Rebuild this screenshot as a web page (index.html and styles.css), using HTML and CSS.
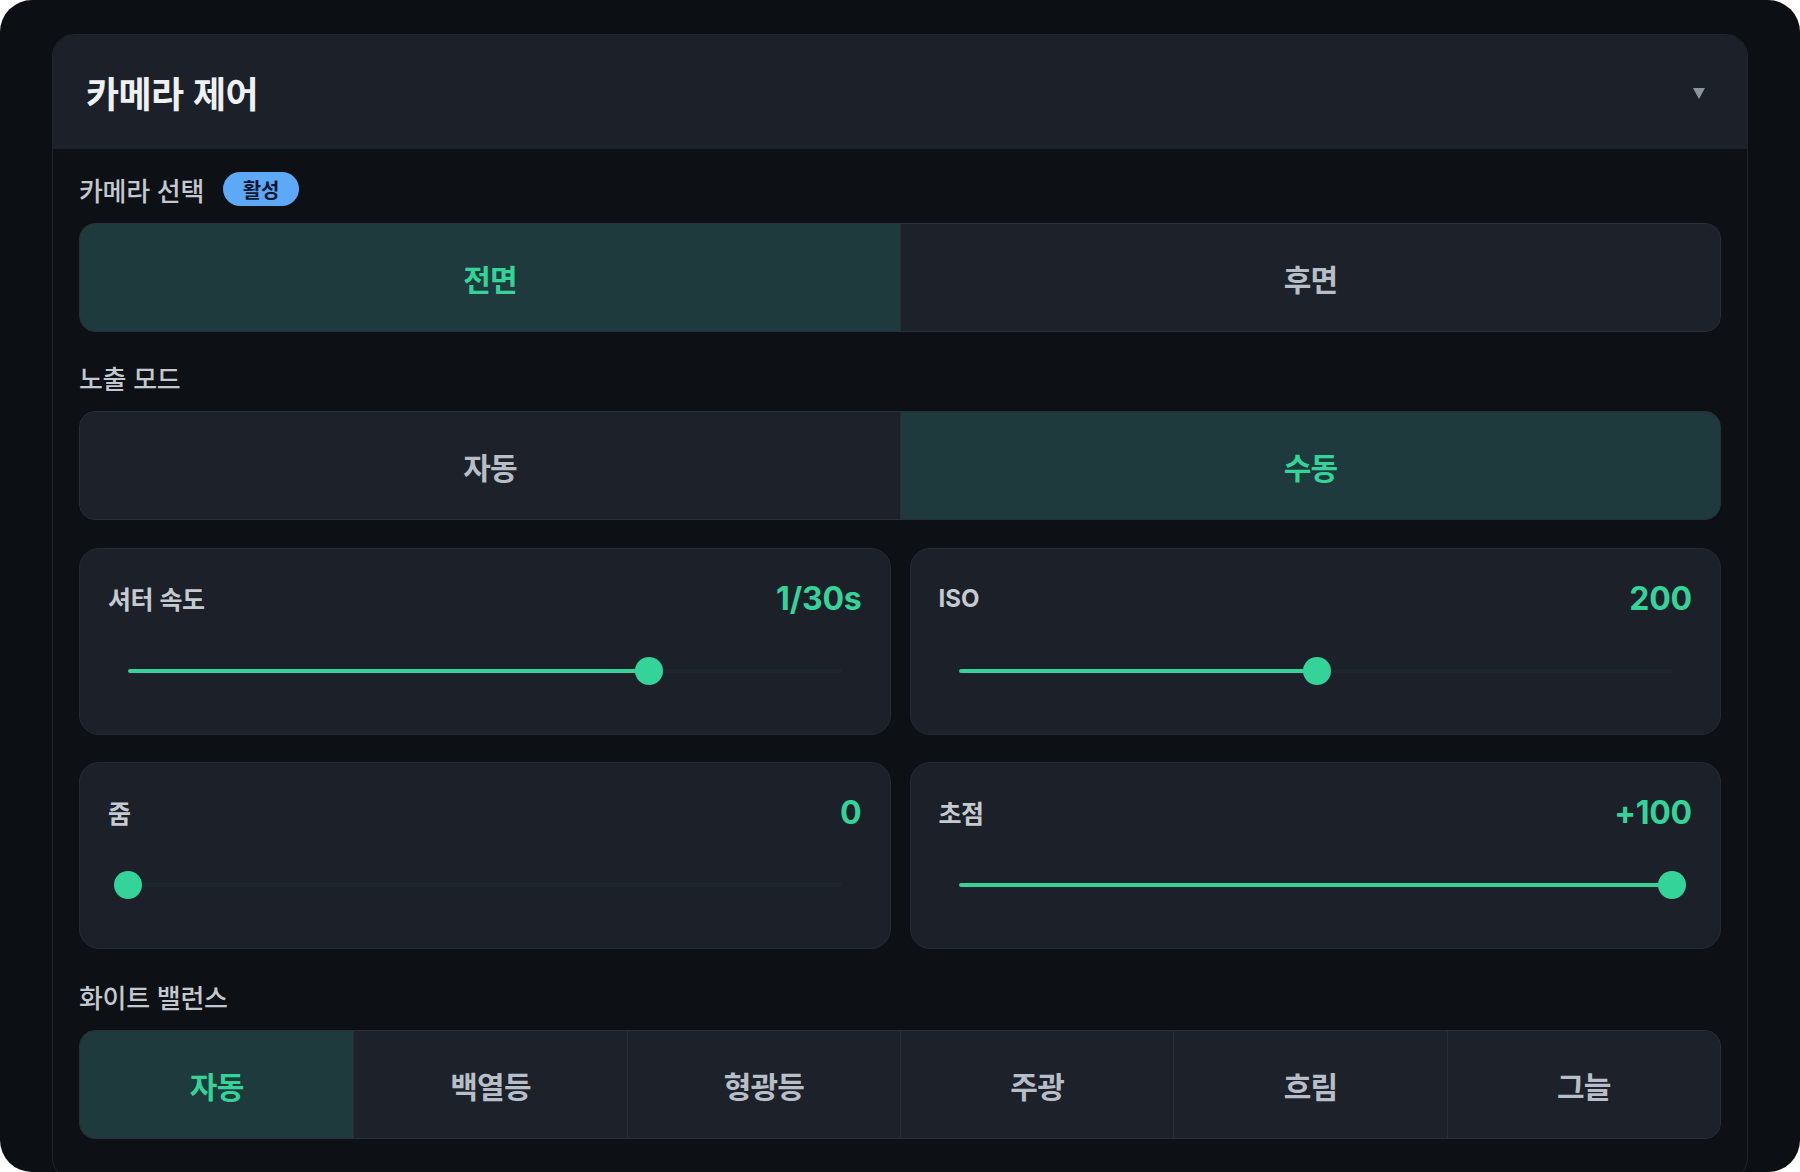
FILE: index.html
```html
<!DOCTYPE html>
<html lang="ko">
<head>
<meta charset="utf-8">
<title>카메라 제어</title>
<link rel="stylesheet" href="styles.css">
</head>
<body>
<div class="app">
  <div class="panel">
    <div class="panel-header">
      <h1 class="panel-title">카메라 제어</h1>
      <span class="chevron"></span>
    </div>
    <div class="panel-body">
      <section class="section section-camera">
        <div class="section-label">
          <span>카메라 선택</span>
          <span class="badge">활성</span>
        </div>
        <div class="segmented cols-2">
          <button class="seg active">전면</button>
          <button class="seg">후면</button>
        </div>
      </section>

      <section class="section section-exposure">
        <div class="section-label"><span>노출 모드</span></div>
        <div class="segmented cols-2">
          <button class="seg">자동</button>
          <button class="seg active">수동</button>
        </div>
      </section>

      <section class="section section-cards">
        <div class="cards">
          <div class="card">
            <div class="card-head">
              <span class="card-label">셔터 속도</span>
              <span class="card-value">1/30s</span>
            </div>
            <div class="slider">
              <div class="slider-inner">
                <div class="track"></div>
                <div class="fill" style="width:73%"></div>
                <div class="thumb" style="left:73%"></div>
              </div>
            </div>
          </div>
          <div class="card">
            <div class="card-head">
              <span class="card-label latin">ISO</span>
              <span class="card-value">200</span>
            </div>
            <div class="slider">
              <div class="slider-inner">
                <div class="track"></div>
                <div class="fill" style="width:50.2%"></div>
                <div class="thumb" style="left:50.2%"></div>
              </div>
            </div>
          </div>
          <div class="card">
            <div class="card-head">
              <span class="card-label">줌</span>
              <span class="card-value">0</span>
            </div>
            <div class="slider">
              <div class="slider-inner">
                <div class="track"></div>
                <div class="fill" style="width:0%"></div>
                <div class="thumb" style="left:0%"></div>
              </div>
            </div>
          </div>
          <div class="card">
            <div class="card-head">
              <span class="card-label">초점</span>
              <span class="card-value">+100</span>
            </div>
            <div class="slider">
              <div class="slider-inner">
                <div class="track"></div>
                <div class="fill" style="width:100%"></div>
                <div class="thumb" style="left:100%"></div>
              </div>
            </div>
          </div>
        </div>
      </section>

      <section class="section section-wb">
        <div class="section-label"><span>화이트 밸런스</span></div>
        <div class="segmented cols-6">
          <button class="seg active">자동</button>
          <button class="seg">백열등</button>
          <button class="seg">형광등</button>
          <button class="seg">주광</button>
          <button class="seg">흐림</button>
          <button class="seg">그늘</button>
        </div>
      </section>
    </div>
  </div>
</div>
</body>
</html>
```

FILE: styles.css
```css
* {
  box-sizing: border-box;
}

html, body {
  margin: 0;
  padding: 0;
  background: #ffffff;
}

body {
  font-family: "Noto Sans CJK KR", "Noto Sans", sans-serif;
}

.app {
  width: 1800px;
  height: 1172px;
  background: #0c0f13;
  border-radius: 32px;
  overflow: hidden;
  padding: 34px 52px 0;
}

.panel {
  background: #0d1015;
  border: 1px solid #20252d;
  border-radius: 22px;
  overflow: hidden;
}

.panel-header {
  height: 114px;
  background: #1b2029;
  display: flex;
  align-items: center;
  justify-content: space-between;
  padding: 0 42px 0 33px;
}

.panel-title {
  margin: 0;
  font-size: 36px;
  font-weight: 700;
  color: #eef1f4;
  letter-spacing: -0.6px;
}

.chevron {
  width: 0;
  height: 0;
  border-left: 6px solid transparent;
  border-right: 6px solid transparent;
  border-top: 11px solid #8d949e;
  margin-top: 3px;
}

.panel-body {
  padding: 23px 26px 40px;
  display: flex;
  flex-direction: column;
}

.section {
  display: flex;
  flex-direction: column;
}

.section-exposure {
  margin-top: 28px;
}

.section-cards {
  margin-top: 28px;
}

.section-wb {
  margin-top: 30px;
}

.section-label {
  height: 34px;
  display: flex;
  align-items: center;
  gap: 19px;
  margin-bottom: 17px;
  font-size: 26px;
  font-weight: 500;
  color: #c3c8cf;
  letter-spacing: -0.3px;
}

.badge {
  height: 34px;
  width: 76px;
  border-radius: 17px;
  background: #5ea8f8;
  color: #0b1730;
  font-size: 20px;
  font-weight: 700;
  display: flex;
  align-items: center;
  justify-content: center;
  letter-spacing: 0;
}

.segmented {
  display: grid;
  height: 109px;
  border: 1px solid #2a303a;
  border-radius: 16px;
  overflow: hidden;
  background: #1c212a;
}

.cols-2 {
  grid-template-columns: repeat(2, 1fr);
}

.cols-6 {
  grid-template-columns: repeat(6, 1fr);
}

.seg {
  appearance: none;
  border: 0;
  margin: 0;
  padding: 0;
  background: #1c212a;
  color: #b7bec7;
  font-family: inherit;
  font-size: 30px;
  font-weight: 700;
  letter-spacing: -0.8px;
  display: flex;
  align-items: center;
  justify-content: center;
}

.seg + .seg {
  border-left: 1px solid #282d36;
}

.seg.active {
  background: #1f3a3c;
  color: #34d399;
}

.cards {
  display: grid;
  grid-template-columns: 1fr 1fr;
  column-gap: 19px;
  row-gap: 27px;
}

.card {
  background: #1b2029;
  border: 1px solid #252b34;
  border-radius: 20px;
  padding: 28px 28px 34px;
}

.card-head {
  height: 42px;
  display: flex;
  align-items: center;
  justify-content: space-between;
}

.card-label {
  font-size: 25px;
  font-weight: 600;
  color: #c5cad1;
  letter-spacing: -0.5px;
}

.card-label.latin {
  font-family: "Inter", "Noto Sans", sans-serif;
  font-weight: 700;
  font-size: 24px;
  letter-spacing: 0;
}

.card-value {
  font-family: "Inter", "Noto Sans", sans-serif;
  font-size: 32px;
  font-weight: 700;
  color: #34d399;
  letter-spacing: -0.2px;
}

.slider {
  height: 58px;
  margin-top: 23px;
  padding: 0 20px;
}

.slider-inner {
  position: relative;
  height: 100%;
}

.track,
.fill {
  position: absolute;
  left: 0;
  top: 27px;
  height: 4px;
  border-radius: 2px;
}

.track {
  right: 0;
  background: #1f252e;
}

.fill {
  background: #34d399;
}

.thumb {
  position: absolute;
  top: 29px;
  width: 28px;
  height: 28px;
  border-radius: 50%;
  background: #34d399;
  transform: translate(-50%, -50%);
}
```
